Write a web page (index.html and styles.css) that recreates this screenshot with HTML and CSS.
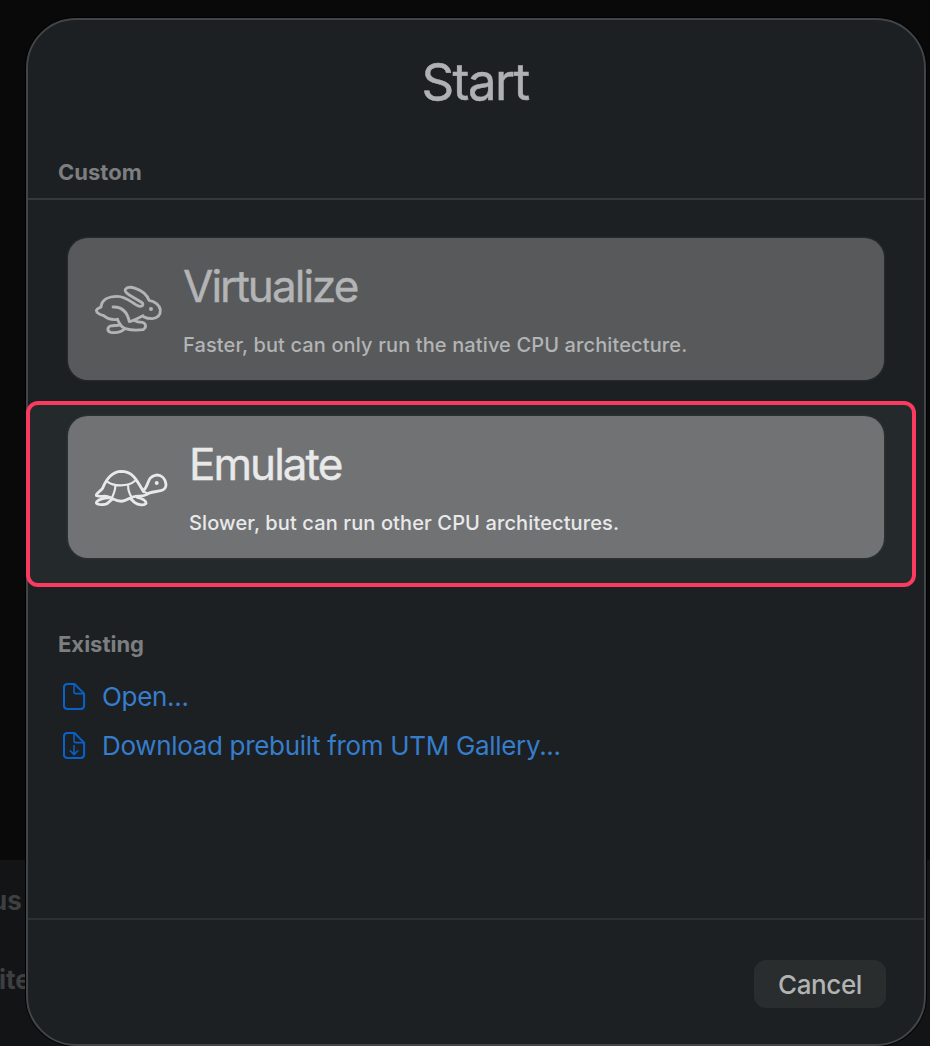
FILE: index.html
```html
<!DOCTYPE html>
<html lang="en">

<head>
    <meta charset="UTF-8">
    <meta name="viewport" content="width=device-width, initial-scale=1.0">
    <title>Start</title>
    <link rel="stylesheet" href="styles.css">
</head>

<body>
    <!-- Window behind the dialog -->
    <div class="backdrop">
        <span>us</span>
        <span>ite</span>
    </div>

    <main class="dialog">
        <h1>Start</h1>
        <h2 class="custom">Custom</h2>

        <div class="option">
            <button class="card">
                <svg class="rabbit" viewBox="27 27 210 156">
                    <path d="M98 133 C76 136 65 130 56 122 C45 119 35 116 34 106 C36 100 43 99 48 96 C50 75 69 64 97 64 C119 64 135 78 151 88 C160 94 168 95 172 92 C176 88 173 84 168 81 L133 60 C121 52 119 47 121 43 C126 36 139 36 151 40 C172 47 187 61 192 76 C209 78 224 91 226 104 C227 120 217 129 202 131 C192 131 184 130 177 126" />
                    <path d="M84 96 C110 95 127 111 133 140 C146 137 160 129 174 122" />
                    <path d="M97 133 C103 146 108 157 121 161 C138 166 158 166 174 164 C185 158 184 145 172 142 C163 142 155 141 149 137" />
                    <path d="M105 149 C98 153 87 150 76 153 C66 158 66 169 77 172 C94 174 109 173 119 161" />
                    <circle class="eye" cx="198" cy="102" r="6" />
                </svg>
                <div class="text">
                    <strong>Virtualize</strong>
                    <span>Faster, but can only run the native CPU architecture.</span>
                </div>
            </button>
        </div>

        <div class="option selected">
            <button class="card">
                <svg class="turtle" viewBox="27 38 226 120">
                    <path d="M34 120 C36 110 48 107 53 99 C62 76 78 49 109 48 C143 48 155 72 176 109" />
                    <path d="M34 120 C38 126 52 122 65 123 C80 126 89 137 110 138 C128 137 137 124 152 123 C167 122 175 124 185 118 C197 108 211 111 228 106 C240 103 244 98 244 88 C242 68 229 58 214 59 C185 64 194 91 176 105" />
                    <path class="thin" d="M66 78 C85 94 129 95 151 76 M91 91 C92 105 86 116 81 127 M130 91 C129 106 134 116 141 127 M178 109 L190 116" />
                    <path d="M76 128 C58 127 35 133 34 143 C36 150 62 150 69 143 L82 132 M137 130 L150 142 C160 150 181 151 184 144 C184 137 172 128 157 126" />
                    <circle class="eye" cx="216" cy="83" r="6" />
                </svg>
                <div class="text">
                    <strong>Emulate</strong>
                    <span>Slower, but can run other CPU architectures.</span>
                </div>
            </button>
        </div>

        <section class="existing">
            <h2>Existing</h2>
            <a href="#">
                <svg class="doc" viewBox="0 0 24 28">
                    <path d="M5 1 H12 L22 11 V23 Q22 27 18 27 H5 Q1 27 1 23 V5 Q1 1 5 1 Z" />
                    <path class="fold" d="M11.5 1 V9 Q11.5 11 13.5 11 H22" />
                </svg>
                <span>Open...</span>
            </a>
            <a href="#">
                <svg class="doc" viewBox="0 0 24 28">
                    <path d="M5 1 H12 L22 11 V23 Q22 27 18 27 H5 Q1 27 1 23 V5 Q1 1 5 1 Z" />
                    <path class="fold" d="M11.5 1 V9 Q11.5 11 13.5 11 H22" />
                    <path class="fold" d="M11.5 14 V23 M7.5 19.5 L11.5 23.5 L15.5 19.5" />
                </svg>
                <span>Download prebuilt from UTM Gallery...</span>
            </a>
        </section>

        <footer>
            <button class="cancel">Cancel</button>
        </footer>
    </main>
</body>

</html>
```
FILE: styles.css
```css
* {
    box-sizing: border-box;
}

body {
    margin: 0;
    height: 1046px;
    padding: 18px 4px 0 26px;
    overflow: hidden;
    background-color: #090909;
    font-family: Inter, sans-serif;
}

.backdrop {
    position: absolute;
    left: 0;
    top: 860px;
    width: 930px;
    height: 186px;
    background-color: #121416;
    color: #3e3f40;
    font-size: 26px;
    font-weight: 700;
}

.backdrop span {
    position: absolute;
    left: -9px;
    top: 25px;
    line-height: 32px;
}

.backdrop span + span {
    left: -1px;
    top: 104px;
}

.dialog {
    position: relative;
    display: flex;
    flex-direction: column;
    width: 900px;
    height: 1028px;
    border: 2px solid #424547;
    border-radius: 50px;
    background-color: #1c2022;
    box-shadow: 0 0 0 1px #000;
}

h1 {
    margin: 30px 0 0;
    height: 64px;
    line-height: 64px;
    font-size: 51px;
    font-weight: 400;
    letter-spacing: -1.6px;
    text-align: center;
    text-indent: -2px;
    color: #b0b1b2;
    -webkit-text-stroke: 0.5px;
}

h2 {
    margin: 0;
    line-height: 28px;
    font-size: 22px;
    font-weight: 700;
    color: #7d7e80;
}

.custom {
    height: 86px;
    padding: 44px 30px 0;
    border-bottom: 2px solid #36393b;
}

.option {
    padding: 38px 40px 0;
}

button {
    border: none;
    font-family: inherit;
}

.card {
    display: flex;
    align-items: center;
    width: 816px;
    height: 142px;
    padding: 0 26px;
    border-radius: 20px;
    background-color: #58595b;
    box-shadow: 0 0 3px #58595b80;
    color: #b3b4b5;
    text-align: left;
}

.card svg {
    fill: none;
    stroke: currentColor;
    stroke-width: 8.5;
    stroke-linecap: round;
    stroke-linejoin: round;
}

.card .thin {
    stroke-width: 6.5;
}

.card .eye {
    fill: currentColor;
    stroke: none;
}

.rabbit {
    width: 70px;
    height: 52px;
    margin-top: 2px;
}

.turtle {
    width: 75px;
    height: 40px;
    margin-top: 2px;
}

.text {
    display: flex;
    flex-direction: column;
    gap: 21px;
    margin-left: 19px;
    padding-bottom: 2px;
}

.text strong {
    line-height: 52px;
    font-size: 44px;
    font-weight: 400;
    letter-spacing: -1.95px;
    -webkit-text-stroke: 0.4px;
}

.text span {
    line-height: 24px;
    font-size: 20px;
    font-weight: 500;
    letter-spacing: 0.12px;
}

.selected {
    width: 890px;
    height: 186px;
    margin: 21px 0 0 -2px;
    padding: 11px 38px 0;
    border: 4px solid #fb3a60;
    border-radius: 12px;
    background-color: #24292b;
}

.selected .card {
    background-color: #717274;
    color: #e9e9ea;
}

.selected .text {
    margin-left: 20px;
}

.existing {
    flex: 1;
    padding: 43px 30px 0;
}

.existing a {
    display: flex;
    align-items: center;
    gap: 16px;
    height: 32px;
    margin-top: 17px;
    padding-left: 5px;
    font-size: 26px;
    letter-spacing: -0.32px;
    color: #367dcc;
    text-decoration: none;
}

.existing h2 + a {
    margin-top: 22px;
}

.doc {
    width: 23px;
    height: 27px;
    fill: none;
    stroke: #0761c8;
    stroke-width: 2.2;
    stroke-linecap: round;
    stroke-linejoin: round;
}

.doc .fold {
    stroke-width: 1.6;
}

footer {
    display: flex;
    justify-content: flex-end;
    height: 126px;
    padding: 40px 38px 0;
    border-top: 2px solid #2c3031;
}

.cancel {
    width: 132px;
    height: 48px;
    padding: 0;
    border-radius: 12px;
    background-color: #292d2e;
    font-size: 26px;
    font-weight: 500;
    letter-spacing: -0.4px;
    color: #b2b3b4;
}
```
